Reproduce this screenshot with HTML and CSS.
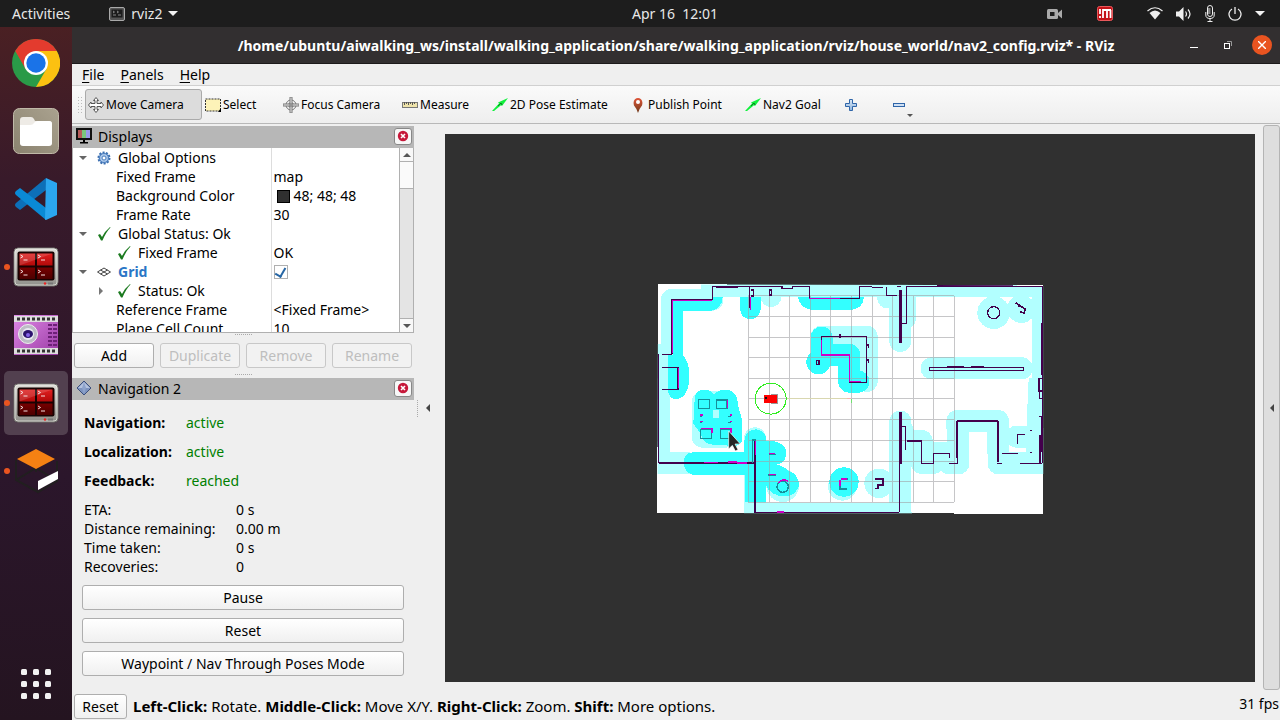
FILE: index.html
```html
<!DOCTYPE html>
<html lang="en">
<head>
<meta charset="utf-8">
<title>RViz</title>
<link rel="stylesheet" href="styles.css">
</head>
<body>
<svg class="defs" width="0" height="0" aria-hidden="true">
  <defs>
    <linearGradient id="blue" x1="0" y1="0" x2="0" y2="1"><stop offset="0" stop-color="#dbe8f6"/><stop offset="1" stop-color="#8db4de"/></linearGradient>
    <linearGradient id="metal" x1="0" y1="0" x2="0" y2="1"><stop offset="0" stop-color="#deded8"/><stop offset="1" stop-color="#8f8f8a"/></linearGradient>
    <linearGradient id="red" x1="0" y1="0" x2="0" y2="1"><stop offset="0" stop-color="#e02020"/><stop offset="0.5" stop-color="#b00808"/><stop offset="0.5" stop-color="#7c0000"/><stop offset="1" stop-color="#4c0000"/></linearGradient>
    <linearGradient id="violet" x1="0" y1="0" x2="1" y2="1"><stop offset="0" stop-color="#e08ae8"/><stop offset="1" stop-color="#9a3aa4"/></linearGradient>
    <linearGradient id="pin" x1="0" y1="0" x2="0" y2="1"><stop offset="0" stop-color="#e0563a"/><stop offset="1" stop-color="#6e3a1a"/></linearGradient>
    <linearGradient id="folder" x1="0" y1="1" x2="1" y2="0"><stop offset="0" stop-color="#8a826f"/><stop offset="1" stop-color="#aaa28f"/></linearGradient>
    <symbol id="check" viewBox="0 0 14 14"><path d="M1 8 L3 7 L5 10 Q8 4 13 0 L13.500 .5 Q9 5 5.500 13.500 L4 13.500 Z" fill="#1b7a1f"/></symbol>
    <symbol id="terminal" viewBox="0 0 46 40">
      <rect x="1" y="1" width="44" height="38" rx="4" fill="url(#metal)" stroke="#6f6f6a"/>
      <rect x="2" y="2" width="42" height="36" rx="3" fill="none" stroke="#f0f0ea" opacity=".7"/>
      <rect x="4.500" y="4.500" width="37" height="29" rx="2" fill="#190303"/>
      <path d="M6.500 6.500H22V18.500H6.500ZM24 6.500H39.500V18.500H24ZM6.500 20.500H22V32H6.500ZM24 20.500H39.500V32H24Z" fill="url(#red)"/>
      <path d="M7.500 8l2.500 1.500-2.500 1.500m3 2h4M25 8l2.500 1.500-2.500 1.500m3 2h4M7.500 23l2.500 1.500-2.500 1.500m3 2h4M25 23l2.500 1.500-2.500 1.500m3 2h4" fill="none" stroke="#f5dede"/>
      <path d="M6.500 18.500V6.500H39.500Z" fill="#fff" opacity=".14"/>
      <circle cx="32" cy="36.500" r="1.200" fill="#e22"/><path d="M35 36.500h5" stroke="#777" stroke-width="2"/>
    </symbol>
    <symbol id="arrow" viewBox="0 0 16 14"><path d="M0 13 L7 5.500 L6 4.500 L16 0 L10 8 L9 7.200 L2 13Z" fill="#10f03c"/><path d="M6 8l3-3M9 5l1 2" stroke="#0a7a20"/></symbol>
    <symbol id="closer" viewBox="0 0 12 12"><circle cx="6" cy="6" r="5.200" fill="#c6183a"/><path d="M4 4l4 4M8 4l-4 4" stroke="#fff" stroke-width="1.600"/></symbol>
  </defs>
</svg>
<header class="topbar">
  <div class="top-left">
    <button class="top-button">Activities</button>
    <button class="top-button app-menu">
      <svg width="16" height="14" viewBox="0 0 16 14"><rect x=".5" y=".5" width="15" height="13" rx="1.500" fill="#555" stroke="#aaa"/><rect x="2.500" y="2.500" width="11" height="8" fill="#1c1c1c"/><path d="M4 4l1.500 1L4 6M8 4l1.500 1L8 6M4 8h3M9 8h3" fill="none" stroke="#888"/></svg>
      <span>rviz2</span>
      <svg width="10" height="5" viewBox="0 0 10 5"><path d="M0 0h10L5 5z" fill="#f2f2f2"/></svg>
    </button>
  </div>
  <time class="clock">Apr 16&nbsp; 12:01</time>
  <div class="tray">
    <svg class="tray-camera" width="16" height="12" viewBox="0 0 16 12"><rect x="0" y="1" width="11" height="10" rx="1.500" fill="#aaa"/><rect x="3" y="4" width="4.500" height="4" fill="#1d1d1d"/><path d="M11 5l4-3.500v9L11 7z" fill="#aaa"/></svg>
    <svg class="tray-im" width="16" height="15" viewBox="0 0 16 15"><rect x=".5" y=".5" width="15" height="14" rx="2" fill="#c41218" stroke="#e8595c"/><path d="M3 3v5M3 10v2M6 12V4h8M10 4v8M13.500 4v8" fill="none" stroke="#fff" stroke-width="1.800"/></svg>
    <svg width="16" height="13" viewBox="0 0 16 13"><path d="M.5 4Q8-2.500 15.500 4" fill="none" stroke="#eee" stroke-width="1.200"/><path d="M2.500 6Q8 1 13.500 6L8 12.500z" fill="#eee"/></svg>
    <svg width="16" height="14" viewBox="0 0 16 14"><path d="M0 4.500h3L7.500 0v14L3 9.500H0z" fill="#eee"/><path d="M9.500 4.500q2 2.500 0 5M12 2.500q4 4.500 0 9" fill="none" stroke="#eee" stroke-width="1.200"/></svg>
    <svg width="10" height="17" viewBox="0 0 10 17"><rect x="2.500" y=".5" width="5" height="11" rx="2.500" fill="none" stroke="#eee"/><path d="M2.500 4h3M2.500 6h3M2.500 8h3M.8 7v3q0 3.500 4.200 3.500T9.200 10V7M5 13.500V16M2.500 16.500h5" fill="none" stroke="#eee"/></svg>
    <svg width="14" height="14" viewBox="0 0 14 14"><path d="M4 2a6 6 0 1 0 6 0M7 0v7" fill="none" stroke="#eee" stroke-width="1.300"/></svg>
    <svg width="10" height="5" viewBox="0 0 10 5"><path d="M0 0h10L5 5z" fill="#f2f2f2"/></svg>
  </div>
</header>
<div class="desktop">
  <nav class="dock" aria-label="Dock">
    <button class="dock-item" aria-label="Chrome"><svg width="48" height="48" viewBox="0 0 48 48"><circle cx="24" cy="24" r="24" fill="#2a9a48"/><path d="M3.200 12A24 24 0 0 1 44.800 12H24L13.600 30z" fill="#e33b2e"/><path d="M44.800 12A24 24 0 0 1 24 48L34.400 30 24 12z" fill="#fcc111"/><circle cx="24" cy="24" r="12" fill="#fff"/><circle cx="24" cy="24" r="9.700" fill="#1a73e8"/></svg></button>
    <button class="dock-item" aria-label="Files"><svg width="46" height="46" viewBox="0 0 46 46"><rect x=".5" y=".5" width="45" height="45" rx="6" fill="url(#folder)" stroke="#c0b9a8"/><path d="M7 12q0-3 3-3h8q2 0 3 2l1 2h14q3 0 3 3v18q0 3-3 3H10q-3 0-3-3z" fill="#eeebe6"/><path d="M7 17h10q3 0 4-2t4-2h11q3 0 3 3v19q0 3-3 3H10q-3 0-3-3z" fill="#fff"/></svg></button>
    <button class="dock-item" aria-label="Visual Studio Code"><svg width="42" height="42" viewBox="0 0 42 42"><path d="M31 0v12L5 32l-4-3q-2-2 0-4z" fill="#0d6fb8"/><path d="M31 42V30L5 10l-4 3q-2 2 0 4z" fill="#0a8ad6"/><path d="M31 0l11 5v32l-11 5q-1 0-1-1z" fill="#2ba6ef"/></svg></button>
    <button class="dock-item running" aria-label="Terminator"><svg width="46" height="40"><use href="#terminal"/></svg></button>
    <button class="dock-item" aria-label="Video"><svg width="44" height="40" viewBox="0 0 44 40"><rect width="44" height="40" fill="url(#violet)"/><path d="M0 1h44v6H0zM0 33h44v6H0z" fill="#dedede"/><path d="M3 4h39M3 36h39" stroke="#333" stroke-width="3" stroke-dasharray="3 2"/><path d="M34 10h9M34 14h9M34 18h9M34 22h9M34 26h9M34 30h9" stroke="#6d2077" stroke-width="2" stroke-dasharray="4 1"/><circle cx="14" cy="19" r="9.500" fill="#bdbdc6" stroke="#eee"/><circle cx="14" cy="19" r="6" fill="#e9e9f2"/><ellipse cx="14" cy="19" rx="5" ry="4" fill="#2c136e"/><circle cx="14" cy="20" r="2" fill="#8464e8"/></svg></button>
    <button class="dock-item running active" aria-label="Terminator, RViz"><svg width="46" height="40"><use href="#terminal"/></svg></button>
    <button class="dock-item running" aria-label="Gazebo"><svg width="46" height="46" viewBox="0 0 46 46"><path d="M3 12v20l22 12 19-11V13M3 32l20-12 21 13M23 20v4" fill="none" stroke="#211f1f" stroke-width="2"/><path d="M4 11L23 1l19 10-19 10z" fill="#f58113"/><path d="M25 33l20-10v8L25 42z" fill="#fff"/></svg></button>
    <button class="dock-item apps" aria-label="Show applications"><svg width="30" height="30" viewBox="0 0 30 30" fill="#f2f2f2"><rect width="6" height="6" rx="1.500"/><rect x="12" width="6" height="6" rx="1.500"/><rect x="24" width="6" height="6" rx="1.500"/><rect y="12" width="6" height="6" rx="1.500"/><rect x="12" y="12" width="6" height="6" rx="1.500"/><rect x="24" y="12" width="6" height="6" rx="1.500"/><rect y="24" width="6" height="6" rx="1.500"/><rect x="12" y="24" width="6" height="6" rx="1.500"/><rect x="24" y="24" width="6" height="6" rx="1.500"/></svg></button>
  </nav>
  <main class="window">
    <div class="titlebar">
      <h1 class="title">/home/ubuntu/aiwalking_ws/install/walking_application/share/walking_application/rviz/house_world/nav2_config.rviz* - RViz</h1>
      <div class="window-controls">
        <button aria-label="Minimize"><svg width="8" height="8" viewBox="0 0 8 8"><path d="M0 6.500h8" stroke="#fff"/></svg></button>
        <button aria-label="Restore"><svg width="8" height="8" viewBox="0 0 8 8"><path d="M3 .5h4.500V5" fill="none" stroke="#999"/><rect x=".5" y="2.500" width="5" height="5" fill="none" stroke="#fff"/></svg></button>
        <button class="close-window" aria-label="Close"><svg width="8" height="8" viewBox="0 0 8 8"><path d="M0 0l8 8M8 0L0 8" stroke="#fff" stroke-width="1.400"/></svg></button>
      </div>
    </div>
    <div class="menubar">
      <button><u>F</u>ile</button><button><u>P</u>anels</button><button><u>H</u>elp</button>
    </div>
    <div class="toolbar">
      <span class="grip"></span>
      <button class="tool w-move pressed"><svg width="16" height="16" viewBox="0 0 16 16"><path d="M8 .5l2.500 3H9v3h4V5l2.500 3-2.500 3V9.500H9v3h1.500L8 15.500l-2.500-3H7v-3H3V11L.5 8 3 5v1.500h4v-3H5.500z" fill="#fff" stroke="#555"/></svg>Move Camera</button>
      <button class="tool w-select"><svg width="16" height="14" viewBox="0 0 16 14"><rect x=".5" y="1" width="15" height="12" fill="#fdf3b8" stroke="#333" stroke-dasharray="2 1"/><path d="M16 10v4h-3z"/></svg>Select</button>
      <button class="tool w-focus"><svg width="16" height="16" viewBox="0 0 16 16"><g fill="none" stroke="#777"><circle cx="8" cy="8" r="5"/><circle cx="8" cy="8" r="2.500"/><path d="M7 0h2v16H7zM0 7h16v2H0z" fill="#eee"/></g></svg>Focus Camera</button>
      <button class="tool w-measure"><svg width="16" height="8" viewBox="0 0 16 8"><rect x=".5" y="1.500" width="15" height="5" fill="#eee3aa" stroke="#777"/><path d="M2.500 1v3M4.500 1v2M6.500 1v3M8.500 1v2M10.500 1v3M12.500 1v2" stroke="#555"/></svg>Measure</button>
      <button class="tool w-pose"><svg width="16" height="14"><use href="#arrow"/></svg>2D Pose Estimate</button>
      <button class="tool w-point"><svg width="16" height="16" viewBox="0 0 16 16"><path d="M8 16Q7 12 4 8.500C1-1.500 15-1.500 12 8.500Q9 12 8 16z" fill="url(#pin)"/><circle cx="8" cy="5" r="2" fill="#fff"/></svg>Publish Point</button>
      <button class="tool w-goal"><svg width="16" height="14"><use href="#arrow"/></svg>Nav2 Goal</button>
      <button class="tool w-plus" aria-label="Add tool"><svg width="12" height="12" viewBox="0 0 12 12"><path d="M4.500.5h3v4h4v3h-4v4h-3v-4h-4v-3h4z" fill="url(#blue)" stroke="#2f65a8"/></svg></button>
      <button class="tool" aria-label="Remove tool"><svg width="12" height="4" viewBox="0 0 12 4"><rect x=".5" y=".5" width="11" height="3" fill="#cfe0f4" stroke="#2f65a8"/></svg><svg class="drop" width="6" height="3" viewBox="0 0 6 3"><path d="M0 0h6L3 3z" fill="#555"/></svg></button>
    </div>
    <div class="workspace">
      <aside class="panels">
        <section class="displays">
          <header class="panel-head">
            <svg width="16" height="16" viewBox="0 0 16 16"><rect x=".5" y=".5" width="15" height="11" fill="#111" stroke="#111"/><path d="M2 2h4v8H2z" fill="#b65a5a"/><path d="M6 2h4v8H6z" fill="#7bc77b"/><path d="M10 2h4v8h-4z" fill="#9a9ae8"/><path d="M7 12h2v2h3v1.500H4V14h3z"/></svg>
            <h2>Displays</h2>
            <button class="panel-close" aria-label="Close Displays"><svg width="12" height="12"><use href="#closer"/></svg></button>
          </header>
          <div class="tree-frame">
            <div class="tree-view">
            <table class="tree">
              <tr><th><span class="cell"><i class="open"></i><svg class="gear" width="14" height="14" viewBox="0 0 14 14"><circle cx="7" cy="7" r="5.500" fill="#9dbde4" stroke="#3b6fb0" stroke-width="2" stroke-dasharray="2 1.400"/><circle cx="7" cy="7" r="4.500" fill="#a9c6ea" stroke="#4a7dbc"/><circle cx="7" cy="7" r="2" fill="#fff" stroke="#4a7dbc"/></svg>Global Options</span></th><td></td></tr>
              <tr><th><span class="cell leaf">Fixed Frame</span></th><td>map</td></tr>
              <tr><th><span class="cell leaf">Background Color</span></th><td><span class="swatch"></span>48; 48; 48</td></tr>
              <tr><th><span class="cell leaf">Frame Rate</span></th><td>30</td></tr>
              <tr><th><span class="cell"><i class="open"></i><svg width="14" height="14"><use href="#check"/></svg>Global Status: Ok</span></th><td></td></tr>
              <tr><th><span class="cell nested"><i></i><svg width="14" height="14"><use href="#check"/></svg>Fixed Frame</span></th><td>OK</td></tr>
              <tr><th><span class="cell display-name"><i class="open"></i><svg width="14" height="10" viewBox="0 0 14 10"><path d="M.5 5L7 1l6.500 4L7 9zM3.500 3l7 4M3.500 7l7-4" fill="none" stroke="#444"/></svg><label for="grid-on">Grid</label></span></th><td><input id="grid-on" type="checkbox" checked></td></tr>
              <tr><th><span class="cell nested"><i class="shut"></i><svg width="14" height="14"><use href="#check"/></svg>Status: Ok</span></th><td></td></tr>
              <tr><th><span class="cell leaf">Reference Frame</span></th><td>&lt;Fixed Frame&gt;</td></tr>
              <tr><th><span class="cell leaf">Plane Cell Count</span></th><td>10</td></tr>
            </table>
            </div>
            <div class="scrollbar">
              <button aria-label="Scroll up"><svg width="8" height="4" viewBox="0 0 8 4"><path d="M0 4h8L4 0z" fill="#555"/></svg></button>
              <div class="track"><div class="thumb"></div></div>
              <button aria-label="Scroll down"><svg width="8" height="4" viewBox="0 0 8 4"><path d="M0 0h8L4 4z" fill="#555"/></svg></button>
            </div>
          </div>
          <div class="hgrip"></div>
          <div class="button-row">
            <button class="push">Add</button><button class="push" disabled>Duplicate</button><button class="push" disabled>Remove</button><button class="push" disabled>Rename</button>
          </div>
        </section>
        <div class="hgrip between"></div>
        <section class="navigation">
          <header class="panel-head">
            <svg width="16" height="16" viewBox="0 0 16 16"><path d="M8 1l7 7-7 7-7-7z" fill="#7d93bf" stroke="#3c4f7c"/><path d="M8 2l6 6H2z" fill="#b4c2de"/><path d="M8 2l2 6-2 6-2-6z" fill="#8ea3cc"/></svg>
            <h2>Navigation 2</h2>
            <button class="panel-close" aria-label="Close Navigation 2"><svg width="12" height="12"><use href="#closer"/></svg></button>
          </header>
          <dl class="states">
            <dt>Navigation:</dt><dd>active</dd>
            <dt>Localization:</dt><dd>active</dd>
            <dt>Feedback:</dt><dd>reached</dd>
          </dl>
          <dl class="metrics">
            <dt>ETA:</dt><dd>0 s</dd>
            <dt>Distance remaining:</dt><dd>0.00 m</dd>
            <dt>Time taken:</dt><dd>0 s</dd>
            <dt>Recoveries:</dt><dd>0</dd>
          </dl>
          <div class="actions">
            <button class="push">Pause</button>
            <button class="push">Reset</button>
            <button class="push">Waypoint / Nav Through Poses Mode</button>
          </div>
        </section>
      </aside>
      <button class="collapse" aria-label="Collapse left panels"><span class="vgrip"></span><svg width="4" height="8" viewBox="0 0 4 8"><path d="M4 0v8L0 4z" fill="#444"/></svg></button>
      <div class="viewport">
        <svg class="scene" viewBox="-615 -423 2430 1644" role="img" aria-label="Map of the house" shape-rendering="crispEdges">
          <clipPath id="floor"><path d="M24 28L1180 31V716L22 714z"/></clipPath>
          <path d="M24 28L1180 31V716L22 714z" fill="#fff"/>
          <g clip-path="url(#floor)">
            <!-- outer inflation -->
            <g fill="none" stroke="#b2ffff" stroke-width="66" stroke-linejoin="round" stroke-linecap="round">
              <path d="M66 235V74H187V34H1180V564"/>
              <path d="M26 240V564H110M315 490V716H752M751 60V198M751 440V716M765 60V130"/>
              <path d="M515 185H650V318M845 280H1115M755 460L768 498H815V564H850V535H898V565H925L922 438H1044L1046 565H1180M1100 485H1160V565"/>
              <path d="M158 382H225V485H158zM400 635V648"/>
            </g>
            <g fill="#b2ffff">
              <circle cx="363" cy="65" r="31"/><circle cx="1031" cy="113" r="49"/><circle cx="1114" cy="102" r="42"/><circle cx="687" cy="625" r="44"/><circle cx="577" cy="634" r="43"/><circle cx="398" cy="632" r="49"/><path d="M680 66h60v32h-40q-16-8-20-32zM1136 310h44v210h-48V400z"/>
            </g>
            <!-- inner inflation -->
            <g fill="#33ffff">
              <path d="M68 76H187V66H218Q216 100 186 107H98V238Q116 260 117 290V320Q112 370 75 373Q54 370 54 340V240H68zM270 66H333V100Q330 130 301 133Q270 130 270 95zM444 66H642Q640 100 606 104H480Q450 98 444 66z"/>
              <path d="M134 372Q135 344 162 344Q185 344 192 360Q205 340 238 346Q262 352 265 395L275 430V500Q260 522 225 510Q160 516 154 480L130 445zM190 405V430H208V405z" fill-rule="evenodd"/>
              <path d="M130 532H283V497Q286 465 317 463Q348 467 350 500Q372 494 392 506Q413 520 408 542Q404 566 380 568Q402 574 412 585Q445 596 448 630Q436 666 400 664Q362 662 347 630V680H285V600H140Q103 600 101 562Q103 532 130 532z"/>
              <circle cx="582" cy="621" r="44"/><circle cx="505" cy="262" r="36"/>
            </g>
            <path d="M515 188V240H598V320H625" fill="none" stroke="#33ffff" stroke-width="66" stroke-linejoin="round" stroke-linecap="round"/>
            <!-- 10 by 10 grid -->
            <path d="M295 62V682M357 62V682M419 62V682M480 62V682M542 62V682M604 62V682M666 62V682M728 62V682M789 62V682M851 62V682M913 62V682M295 62H913M295 124H913M295 186H913M295 248H913M295 310H913M295 371H913M295 434H913M295 496H913M295 558H913M295 620H913M295 682H913" fill="none" stroke="#a0a0a4" stroke-opacity=".6" stroke-width="3"/>
            <path d="M410 371H600" stroke="#d9d7b0" stroke-width="3"/><path d="M590 371H604" stroke="#f8b0b0" stroke-width="3"/><path d="M604 371V384" stroke="#70e070" stroke-width="3"/>
            <!-- static walls -->
            <g fill="none" stroke="#43004c" stroke-width="4">
              <path d="M26 237V564M36 238H66M36 277H84M36 343H84V277M66 238V74H187V34H295M198 37H264M295 34H396V40H428V34H478V70H628V35H666M666 37H698M709 35V62H740M770 34H1178V564M742 34H752M298 34V100M302 45h9v18h-9M358 45h7v15h-7z"/>
              <path d="M514 185H650V322H598V240H514zM570 178v10M650 210h5v8M650 255h5v8M500 256h7v12h-7zM770 34V145H750"/>
              <path d="M838 277H1120V286H838zM890 276H942M962 274H1002M862 31H1090"/>
              <path d="M1097 83l12 8-4 6M1108 92l18 10-4 12-12-4M676 612h22v18h-14v10h-10" stroke-width="5"/>
              <path d="M1174 145V300M1178 310H1167V348H1178M1180 370H1168V350M1168 425H1176V530M1170 480V565M1176 566H1110M1102 508V478H1126M1056 535H1104M1140 466h6M1140 533h6M1040 566H1056M1044 560V438M922 438V565H898M898 550V535H851V566H814V498H770M767 525V455H755M748 565V712"/>
              <path d="M26 564H312M315 495V712H748M316 712H375"/>
              <path d="M752 45V204M752 410V566" stroke-width="9"/><path d="M922 438H1044M922 438V550" stroke-width="6"/><circle cx="1031" cy="113" r="18"/>
            </g>
            <!-- obstacles -->
            <g fill="none" stroke="#168f9b" stroke-width="4">
              <path d="M146 374h33v26h-34zM199 375h32v25h-32zM151 464h34v26h-34zM211 464h30v26h-30zM308 565V495h10M149 423h8M149 442h8M235 424h8M235 442h8M357 538h20M355 600h22M572 612h22M570 614v28h20"/><circle cx="398" cy="635" r="17"/>
            </g>
            <g fill="none" stroke="#d000c8" stroke-width="4">
              <path d="M67 76V235M68 76H187M301 66V104M478 71H570M514 195V240H598V320H632M85 278V340M232 374V400M152 461H186V475M210 461H243V475M150 420h8M240 420h7M240 440h7M150 440h8M163 563H205M235 561H262M262 564H290M317 498V540M358 535H375M358 598H378M385 624q12-16 30-5M572 612H592M570 614v18M382 711H402"/>
            </g>
            <!-- robot -->
            <circle cx="362" cy="371" r="46.500" fill="none" stroke="#30ee20" stroke-width="3"/>
            <path d="M362 356h22v30h-22z" fill="#999"/><rect x="341" y="359" width="41" height="24" fill="#f00"/><path d="M345 366h6v6h-6z" fill="#111"/>
          </g>
          <path d="M236 468V522L247 511L256 528L264 524L255 507H271z" fill="#262626" stroke="#fff" stroke-width="2" shape-rendering="auto"/>
        </svg>
      </div>
      <button class="collapse right" aria-label="Collapse right panels"><svg width="4" height="8" viewBox="0 0 4 8"><path d="M4 0v8L0 4z" fill="#444"/></svg></button>
    </div>
    <footer class="statusbar">
      <button class="push">Reset</button>
      <p class="hint"><b>Left-Click:</b> Rotate. <b>Middle-Click:</b> Move X/Y. <b>Right-Click:</b> Zoom. <b>Shift:</b> More options.</p>
      <output class="fps">31 fps</output>
    </footer>
  </main>
</div>
</body>
</html>
```
FILE: styles.css
```css
* { box-sizing: border-box; }
body { margin: 0; height: 100vh; display: flex; flex-direction: column; overflow: hidden; background: #efefef; color: #000; font: 14px/19px "Noto Sans", "Open Sans", sans-serif; }
button { font: inherit; color: inherit; margin: 0; padding: 0; border: 0; background: none; }
h1, h2, p, dl, dd { margin: 0; font-size: inherit; font-weight: normal; }
svg { flex: none; display: block; }
.defs { position: absolute; }

.topbar { display: grid; grid-template-columns: 1fr auto 1fr; align-items: center; height: 27px; padding: 0 15px 0 12px; background: #1d1d1d; color: #e8e8e8; }
.top-left { display: flex; gap: 39px; }
.app-menu { display: flex; align-items: center; gap: 6px; }
.clock { padding-left: 73px; }
.tray { display: flex; justify-content: flex-end; align-items: center; gap: 13px; }
.tray-camera, .tray-im { margin-right: 21px; }

.desktop { flex: 1; min-height: 0; display: flex; }
.dock { width: 72px; display: flex; flex-direction: column; gap: 4px; padding: 4px; background: linear-gradient(#4a2023, #381a2a 22%, #2b162b 65%, #241420); }
.dock-item { position: relative; display: flex; align-items: center; justify-content: center; height: 64px; border-radius: 5px; }
.dock-item.active { background: #52404f; }
.running::before { content: ""; position: absolute; left: 0; width: 6px; height: 6px; border-radius: 50%; background: #e95420; }
.apps { margin-top: auto; }

.window { flex: 1; min-width: 0; display: flex; flex-direction: column; background: #efefef; }
.titlebar { display: grid; grid-template-columns: 1fr auto 1fr; align-items: center; height: 37px; background: #322f30; border-bottom: 1px solid #1c1a1b; color: #fff; }
.title { grid-column: 2; font-weight: bold; white-space: nowrap; }
.window-controls { display: flex; justify-content: flex-end; align-items: center; gap: 8px; padding-right: 8px; }
.window-controls button { display: grid; place-items: center; width: 26px; height: 20px; }
.window-controls .close-window { width: 20px; margin-left: 3px; border-radius: 50%; background: #e95420; }
.menubar { display: flex; gap: 16px; height: 22px; padding-left: 10px; border-bottom: 1px solid #d0d0d0; }
.menubar u { text-underline-offset: 2px; }
.toolbar { display: flex; align-items: center; height: 38px; padding-left: 5px; border-bottom: 1px solid #b8b8b8; background: linear-gradient(#fafafa, #eee); font-size: 12px; }
.grip { width: 5px; height: 17px; margin-right: 3px; background: radial-gradient(circle, #bbb 1px, transparent 1px) 0 0 / 3px 3px; }
.tool { position: relative; display: flex; align-items: center; gap: 2px; height: 31px; padding-left: 3px; white-space: nowrap; }
.pressed { border: 1px solid #aaa; border-radius: 3px; background: #dcdcdc; padding-left: 2px; }
.w-move { width: 117px; }
.w-select { width: 78px; }
.w-focus { width: 119px; }
.w-measure { width: 90px; }
.w-pose { width: 138px; }
.w-point { width: 115px; }
.w-goal { width: 100px; }
.w-plus { width: 48px; }
.drop { position: absolute; right: -8px; bottom: 3px; }

.workspace { flex: 1; min-height: 0; display: flex; }
.panels { width: 342px; flex: none; padding-top: 2px; }
.panel-head { display: flex; align-items: center; gap: 6px; height: 22px; padding: 0 2px 2px 4px; background: #b7b7b7; }
.panel-head h2 { flex: 1; }
.panel-close { display: grid; place-items: center; width: 18px; height: 17px; border: 1px solid #888; border-radius: 3px; background: #f7f7f7; }
.tree-frame { display: flex; height: 185px; border: solid #b0b0b0; border-width: 0 1px 1px; background: #fff; }
.tree-view { flex: 1; min-width: 0; overflow: hidden; }
.tree { width: 100%; border-collapse: collapse; table-layout: fixed; }
.tree tr { height: 19px; }
.tree th { width: 198px; padding: 0; border-right: 1px solid #ddd; text-align: left; font-weight: normal; white-space: nowrap; }
.tree td { height: 19px; padding: 0 2px; }
.cell { display: flex; align-items: center; gap: 7px; height: 19px; padding-left: 6px; }
.cell i { width: 11px; display: flex; }
.cell i::before { content: ""; border: 4px solid transparent; }
.cell .open::before { border-top: 4px solid #666; border-bottom: 0; }
.cell .shut::before { border-left: 4px solid #777; border-right: 0; }
.cell.nested { padding-left: 26px; }
.cell.leaf { padding-left: 43px; }
.display-name { color: #2a76c6; font-weight: bold; }
.swatch { display: inline-block; width: 13px; height: 13px; margin: 0 4px 0 3px; border: 1px solid #000; background: #303030; vertical-align: -2px; }
.tree input { appearance: none; display: grid; place-items: center; width: 14px; height: 14px; margin: 0; border: 1px solid #b0b0b0; background: #fff; }
.tree input:checked::before { content: ""; width: 5px; height: 9px; border: solid #2766a4; border-width: 0 2px 2px 0; transform: rotate(30deg); }
.scrollbar { width: 14px; display: flex; flex-direction: column; border-left: 1px solid #b0b0b0; background: #e4e4e4; }
.scrollbar button { display: grid; place-items: center; height: 13px; background: #f8f8f8; }
.track { flex: 1; border: solid #b0b0b0; border-width: 1px 0; }
.thumb { height: 27px; border-bottom: 1px solid #b0b0b0; background: #fafafa; }
.hgrip { height: 10px; padding-top: 1px; }
.hgrip::before { content: ""; display: block; width: 17px; margin: 0 auto; border-top: 1px dotted #aaa; }
.between { padding-top: 6px; }
.button-row { display: grid; grid-template-columns: repeat(4, 1fr); gap: 6px; padding: 0 2px; }
.push { height: 25px; border: 1px solid #aeaeae; border-radius: 3px; background: linear-gradient(#fff, #f0f0f0); }
.push:disabled { color: #bebebe; border-color: #c8c8c8; background: #f2f2f2; }
.states { display: grid; grid-template-columns: 102px 1fr; padding: 8px 12px 0; line-height: 29px; }
.states dt { font-weight: bold; }
.states dd { color: #008000; }
.metrics { display: grid; grid-template-columns: 152px 1fr; padding: 5px 12px 0; }
.actions { display: grid; gap: 8px; padding: 9px 10px 0; }
.collapse { display: flex; align-items: center; gap: 8px; width: 31px; flex: none; padding-left: 3px; }
.vgrip { width: 1px; height: 17px; border-left: 1px dotted #aaa; }
.viewport { flex: 1; min-width: 0; margin: 10px 0; background: #303030; }
.scene { width: 100%; height: 100%; }
.collapse.right { width: 17px; margin: 1px 0 2px 8px; padding: 0 0 0 6px; border: 1px solid #b4b4b4; border-radius: 3px; background: #dedede; }
.statusbar { display: flex; align-items: center; height: 28px; padding-left: 2px; }
.statusbar .push { width: 53px; margin-right: 6px; }
.hint { font-size: 15px; }
.fps { margin-left: auto; padding: 0 1px 6px 0; }
```
